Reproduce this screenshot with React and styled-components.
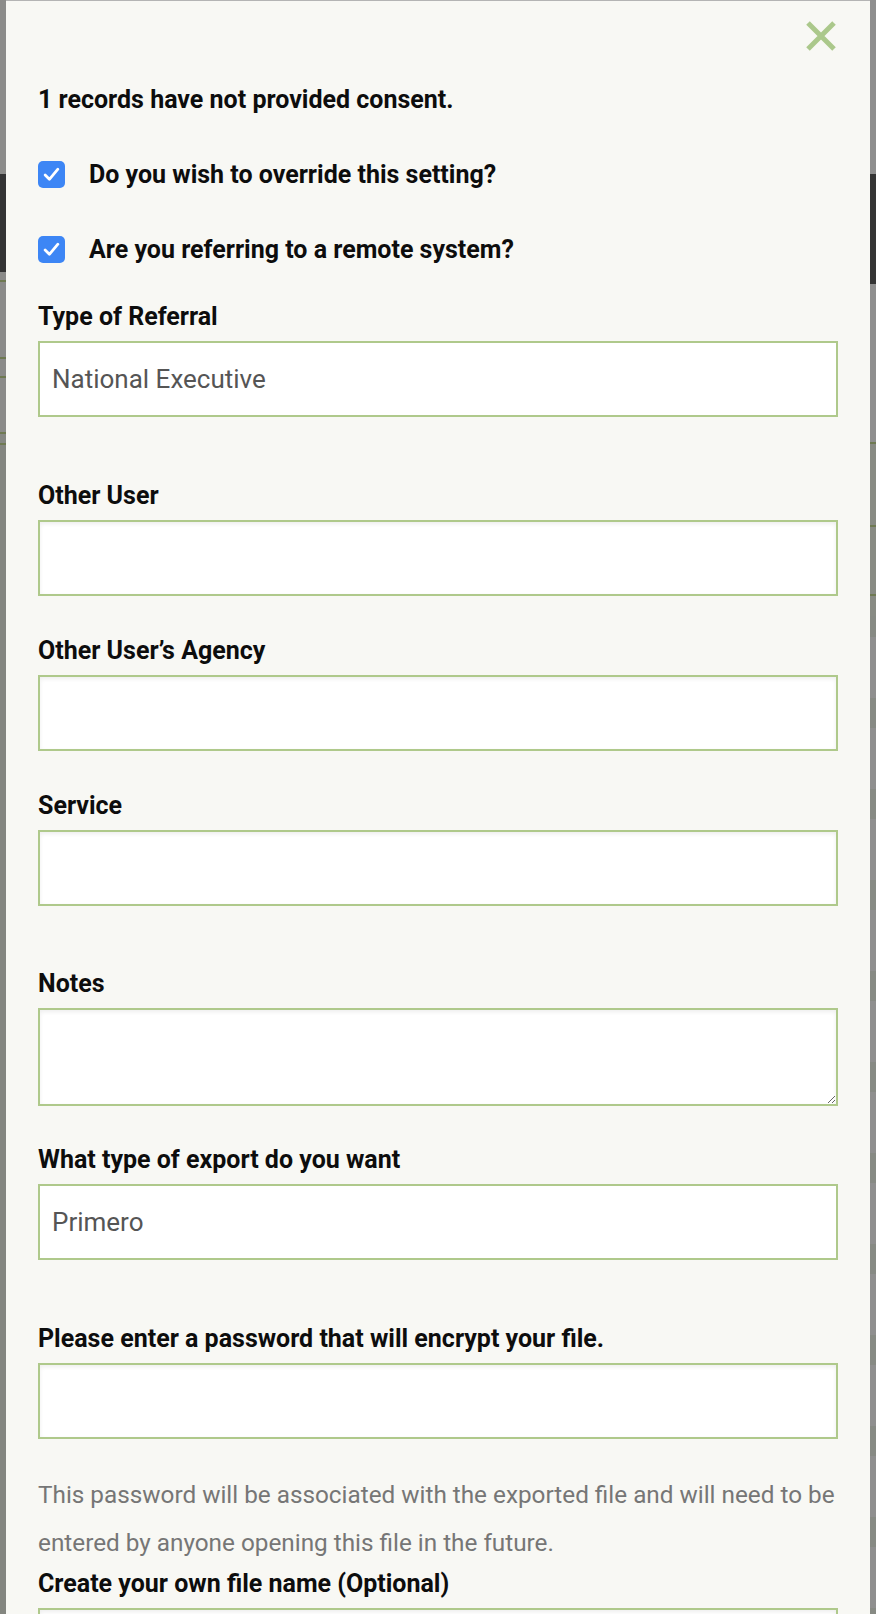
import React from "react";
import styled, { createGlobalStyle } from "styled-components";

const GlobalStyle = createGlobalStyle`
  html, body {
    margin: 0;
    padding: 0;
    background: #8b8b89;
  }
  body {
    font-family: Roboto, "Noto Sans", "Liberation Sans", sans-serif;
    overflow: hidden;
  }
  * {
    box-sizing: border-box;
  }
`;

const Page = styled.div`
  display: grid;
  grid-template-columns: 6px 1fr 6px;
  min-height: 1614px;
`;

// bits of the page behind the dimmed overlay
const LeftStrip = styled.div`
  background:
    linear-gradient(#8c8c8a 0 174px, #343434 174px 272px, #8b8b89 272px 280px,
      #6f7a52 280px 282px, #8b8b89 282px 357px, #6f7a52 357px 359px,
      #8b8b89 359px 376px, #6f7a52 376px 378px, #8b8b89 378px 432px,
      #6f7a52 432px 434px, #868883 434px 443px, #6f7a52 443px 445px,
      #848680 445px 100%);
`;

const RightStrip = styled.div`
  background:
    linear-gradient(#8e8e8e 0 174px, #343434 174px 284px, #8f8f8f 284px 442px,
      #6f7a52 442px 444px, #888b84 444px 525px, #6f7a52 525px 527px,
      #888b84 527px 594px, #6f7a52 594px 596px, #888b84 596px 616px,
      transparent 616px),
    repeating-linear-gradient(#8f8f8f 0 61px, #878a84 61px 91px);
`;

const Modal = styled.div`
  background: #f8f8f4;
  border-top: 1px solid #b4b4b4;
  padding: 20px 32px 40px;
  color: #0d0d0d;
`;

const CloseRow = styled.div`
  display: flex;
  justify-content: flex-end;
  padding-right: 2px;
`;

const CloseButton = styled.button`
  width: 30px;
  height: 30px;
  padding: 0;
  border: 0;
  background: none;
  cursor: pointer;
  display: flex;
`;

const Message = styled.p`
  margin: 34px 0 44px;
  font-size: 25px;
  line-height: 30px;
  font-weight: 700;
`;

const CheckRow = styled.label`
  display: flex;
  align-items: center;
  gap: 24px;
  height: 30px;
  margin-bottom: ${(p) => p.$gap || 0}px;
  font-size: 25px;
  font-weight: 700;
`;

const CheckBox = styled.span`
  width: 27px;
  height: 27px;
  border-radius: 5px;
  background: #3d86f5;
  display: flex;
  align-items: center;
  justify-content: center;
  flex: none;
`;

const Field = styled.div`
  display: flex;
  flex-direction: column;
  gap: 9px;
  margin-bottom: ${(p) => p.$after}px;
`;

const Label = styled.label`
  font-size: 25px;
  line-height: 30px;
  font-weight: 700;
`;

const Input = styled.input`
  width: 100%;
  height: 76px;
  border: 2px solid #afc98b;
  background: #fff;
  padding: 0 12px;
  font-family: inherit;
  font-size: 26px;
  color: #555;
  outline: none;
  box-shadow: ${(p) => (p.$flat ? "none" : "inset 0 2px 4px rgba(0, 0, 0, 0.07)")};
  border-radius: 0;
`;

const TextArea = styled.textarea`
  width: 100%;
  height: 98px;
  border: 2px solid #afc98b;
  background: #fff;
  padding: 10px 12px;
  font-family: inherit;
  font-size: 26px;
  color: #555;
  outline: none;
  box-shadow: inset 0 2px 4px rgba(0, 0, 0, 0.07);
  resize: vertical;
  display: block;
`;

const Help = styled.p`
  margin: -4px 0 2px;
  font-size: 24.3px;
  line-height: 48px;
  color: #767676;
`;

const CloseIcon = () => (
  <svg width="30" height="30" viewBox="0 0 30 30">
    <path d="M2 2 L28 28 M28 2 L2 28" stroke="#abc88b" strokeWidth="5" />
  </svg>
);

const Tick = () => (
  <svg width="17" height="15" viewBox="0 0 16 14">
    <path
      d="M2 7.5 L6 11.5 L14 2"
      fill="none"
      stroke="#fff"
      strokeWidth="2.6"
      strokeLinecap="round"
      strokeLinejoin="round"
    />
  </svg>
);

const fields = [
  { label: "Type of Referral", value: "National Executive", flat: true, after: 64 },
  { label: "Other User", after: 40 },
  { label: "Other User’s Agency", after: 40 },
  { label: "Service", after: 63 },
];

export default function App() {
  return (
    <>
      <GlobalStyle />
      <Page>
        <LeftStrip />
        <Modal>
          <CloseRow>
            <CloseButton aria-label="Close">
              <CloseIcon />
            </CloseButton>
          </CloseRow>
          <Message>1 records have not provided consent.</Message>
          <CheckRow $gap={45}>
            <CheckBox>
              <Tick />
            </CheckBox>
            Do you wish to override this setting?
          </CheckRow>
          <CheckRow $gap={38}>
            <CheckBox>
              <Tick />
            </CheckBox>
            Are you referring to a remote system?
          </CheckRow>

          {fields.map((f) => (
            <Field key={f.label} $after={f.after}>
              <Label>{f.label}</Label>
              <Input $flat={f.flat} defaultValue={f.value || ""} readOnly={!!f.value} />
            </Field>
          ))}

          <Field $after={39}>
            <Label>Notes</Label>
            <TextArea />
          </Field>

          <Field $after={64}>
            <Label>What type of export do you want</Label>
            <Input $flat defaultValue="Primero" readOnly />
          </Field>

          <Field $after={36}>
            <Label>Please enter a password that will encrypt your file.</Label>
            <Input type="password" />
          </Field>

          <Help>
            This password will be associated with the exported file and will need to be
            entered by anyone opening this file in the future.
          </Help>

          <Field $after={40}>
            <Label>Create your own file name (Optional)</Label>
            <Input />
          </Field>
        </Modal>
        <RightStrip />
      </Page>
    </>
  );
}
